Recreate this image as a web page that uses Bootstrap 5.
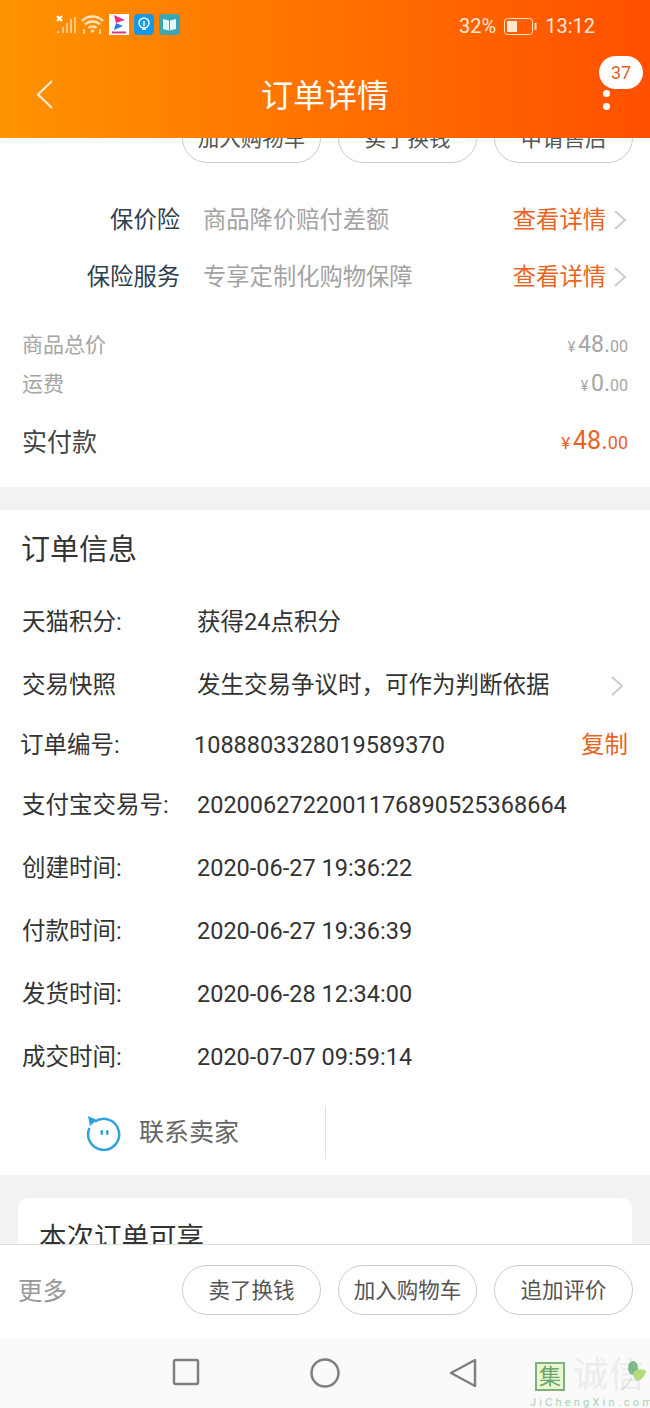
<!DOCTYPE html>
<html lang="zh-CN">
<head>
<meta charset="UTF-8">
<meta name="viewport" content="width=device-width, initial-scale=1.0">
<title>订单详情</title>
<link href="https://cdn.jsdelivr.net/npm/bootstrap@5.3.0/dist/css/bootstrap.min.css" rel="stylesheet">
<style>
body {
    font-family: Roboto, "Noto Sans CJK SC", sans-serif;
    background: #f2f2f2;
    color: #333;
    height: 1408px;
    overflow: hidden;
}
.app-head {
    height: 138px;
    background: linear-gradient(90deg, #ff9300, #ff5000);
    color: #fff;
    z-index: 5;
    flex: none;
}
.status-line { height: 52px; padding: 14px 55px 0 56px; }
.status-text { font-size: 20px; line-height: 24px; color: #ffe9d2; }
.status-icons { gap: 5px; }
.title-line { height: 86px; }
.app-title { font-size: 32px; line-height: 44px; margin-top: 1px; }
.back-btn { position: absolute; left: 36px; top: 80px; }
.more-dots { position: absolute; left: 603px; top: 90px; width: 8px; }
.more-dots i { display: block; width: 7px; height: 7px; border-radius: 50%; background: #fff; margin-bottom: 6px; }
.msg-count {
    position: absolute; left: 599px; top: 56px; width: 44px; height: 33px;
    border-radius: 17px; background: #fff; color: #d8602c;
    font-size: 18px; line-height: 33px; text-align: center;
}
.scroll-view { flex: 1 1 auto; overflow: hidden; min-height: 0; }
.scroll-inner { margin-top: -25px; }
.white-block { background: #fff; }
.pill-row { gap: 17px; padding-right: 17px; }
.pill-btn {
    width: 139px; height: 50px; border: 1px solid #ccc; border-radius: 25px;
    background: #fff; color: #555; font-size: 21.5px; line-height: 50px; text-align: center;
}
.top-pills { margin-bottom: 29px; }
.ins-row { height: 57px; font-size: 23.3px; }
.ins-label { width: 180px; text-align: right; color: #30404f; }
.ins-desc { margin-left: 23px; color: #a3a3a3; flex: 1; }
.ins-link { color: #e8641f; }
.arrow-gray { margin: -2px 23px 0 7px; }
.price-rows { padding: 20px 22px 6px; }
.price-row { height: 39px; font-size: 21px; color: #a5a5a5; }
.price-total { height: 77px; font-size: 25px; color: #444; }
.yen { font-size: 14px; margin-right: 3px; }
.int-part { font-size: 23px; }
.cent-part { font-size: 16px; }
.price-total .cost { color: #e8641f; margin-top: -3px; }
.price-total .yen { font-size: 17px; }
.price-total .int-part { font-size: 25px; }
.price-total .cent-part { font-size: 18px; }
.info-block { margin-top: 23px; }
.info-title { height: 82px; padding-left: 21px; font-size: 29px; color: #333; }
.info-row { height: 63px; padding: 0 22px; font-size: 23.5px; color: #333; }
.info-row.h-first { height: 62px; }
.info-row.h-tall { height: 64px; }
.info-row.h-short { height: 56px; }
.info-row.h-mid { height: 63px; }
.info-key { width: 175px; flex: none; }
.info-copy { color: #e8641f; margin-left: auto; }
.info-shift { margin-left: -2px; width: 174px; }
.contact-row { height: 86px; }
.contact-half { width: 326px; height: 53px; border-right: 1px solid #e3e3e3; padding-left: 86px; margin-top: 1px; gap: 17px; font-size: 25px; color: #666; }
.benefit-card {
    margin: 23px 18px 0; height: 200px; border-radius: 10px; background: #fff;
    padding: 20px 21px; font-size: 27.5px; line-height: 40px; color: #333;
}
.foot-bar { height: 94px; border-top: 1px solid #ddd; background: #fff; flex: none; z-index: 5; }
.foot-more { font-size: 24.5px; color: #999; padding: 13px 0 0 18px; }
.nav-strip { height: 70px; background: #fafafa; flex: none; position: relative; z-index: 5; }
.nav-btn { position: absolute; top: 20px; }
.nav-square { left: 172px; }
.nav-circle { left: 309px; }
.nav-back { left: 449px; }
.stamp { position: absolute; left: 530px; top: 18px; width: 120px; height: 52px; overflow: hidden; }
.stamp-box {
    position: absolute; left: 5px; top: 6px; width: 30px; height: 29px;
    border: 2px solid #7fb27a; background: #eaf8d2; color: #6fa56b;
    font-size: 22px; line-height: 25px; text-align: center;
}
.stamp-words { position: absolute; left: 43px; top: 1px; font-size: 35px; line-height: 38px; color: #ececec; letter-spacing: 1px; white-space: nowrap; }
.stamp-leaf { position: absolute; left: 90px; top: 4px; }
.stamp-url { position: absolute; left: 0; top: 40px; font-size: 11px; line-height: 13px; color: #a9d2b4; letter-spacing: 3.2px; white-space: nowrap; }
</style>
</head>
<body class="d-flex flex-column">

<header class="app-head position-relative">
    <div class="status-line d-flex justify-content-between">
        <div class="status-icons d-flex align-items-start">
            <svg width="20" height="21" viewBox="0 0 20 21">
                <g stroke="#ffc680" stroke-width="2" fill="none">
                    <path d="M2 19v-2M7 19v-6M11 19v-10M15 19v-14M19 19v-16" />
                </g>
                <path d="M1 2l5 5M6 2l-5 5" stroke="#fff" stroke-width="2" />
            </svg>
            <svg width="23" height="21" viewBox="0 0 23 21" fill="none" stroke="#ffe3bf" stroke-width="2.400">
                <path d="M1 7c6-6 15-6 21 0" />
                <path d="M4 10.500c4-4 11-4 15 0" />
                <path d="M7.500 14c2-2 6-2 8 0" />
                <circle cx="11.500" cy="17" r="1.800" fill="#ffe3bf" stroke="none" />
                <path d="M3 15v5M19 15v5" stroke-width="1.500" />
            </svg>
            <svg width="20" height="21" viewBox="0 0 20 21">
                <rect width="20" height="21" fill="#fff" />
                <path d="M5 1l11 5-9 3z" fill="#e8327c" />
                <path d="M7 9l7 3-9 4z" fill="#2a7de1" />
                <rect x="3" y="17.500" width="14" height="2" fill="#c9408c" />
            </svg>
            <svg width="20" height="21" viewBox="0 0 20 21">
                <rect width="20" height="21" rx="4" fill="#1399ec" />
                <circle cx="10" cy="9" r="5" fill="none" stroke="#fff" stroke-width="1.500" />
                <path d="M8 15h4M10 7v5" stroke="#fff" stroke-width="1.500" />
            </svg>
            <svg width="21" height="21" viewBox="0 0 21 21">
                <rect width="21" height="21" rx="4" fill="#3aa6b8" />
                <path d="M4 5l6 1.500v10l-6-1.500zM17 5l-6 1.500v10l6-1.500z" fill="#e4f7fb" />
            </svg>
        </div>
        <div class="status-text d-flex align-items-center gap-2 align-self-start">
            <span>32%</span>
            <svg width="33" height="17" viewBox="0 0 33 17">
                <rect x="0.500" y="0.500" width="28" height="16" rx="3" fill="none" stroke="#ffe3bf" />
                <rect x="3" y="3" width="10" height="11" fill="#ffe9d2" />
                <rect x="30.500" y="5" width="2" height="7" fill="#ffe3bf" />
            </svg>
            <span>13:12</span>
        </div>
    </div>
    <div class="title-line d-flex justify-content-center align-items-center">
        <h1 class="app-title fw-normal mb-0">订单详情</h1>
    </div>
    <svg class="back-btn" width="17" height="29" viewBox="0 0 17 29" fill="none" stroke="#ffe9d2" stroke-width="2.200">
        <path d="M16 1L2 14.500 16 28" />
    </svg>
    <div class="more-dots"><i></i><i></i></div>
    <div class="msg-count">37</div>
</header>

<main class="scroll-view">
    <div class="scroll-inner">
        <div class="white-block">
            <div class="pill-row top-pills d-flex justify-content-end">
                <div class="pill-btn">加入购物车</div>
                <div class="pill-btn">卖了换钱</div>
                <div class="pill-btn">申请售后</div>
            </div>
            <div class="ins-row d-flex align-items-center">
                <span class="ins-label">保价险</span>
                <span class="ins-desc">商品降价赔付差额</span>
                <span class="ins-link">查看详情</span>
                <svg class="arrow-gray" width="14" height="20" viewBox="0 0 14 20" fill="none" stroke="#ccc" stroke-width="2"><path d="M2 1l10 9-10 9" /></svg>
            </div>
            <div class="ins-row d-flex align-items-center">
                <span class="ins-label">保险服务</span>
                <span class="ins-desc">专享定制化购物保障</span>
                <span class="ins-link">查看详情</span>
                <svg class="arrow-gray" width="14" height="20" viewBox="0 0 14 20" fill="none" stroke="#ccc" stroke-width="2"><path d="M2 1l10 9-10 9" /></svg>
            </div>
            <div class="price-rows">
                <div class="price-row d-flex justify-content-between align-items-center">
                    <span>商品总价</span>
                    <span class="cost"><span class="yen">¥</span><span class="int-part">48.</span><span class="cent-part">00</span></span>
                </div>
                <div class="price-row d-flex justify-content-between align-items-center">
                    <span>运费</span>
                    <span class="cost"><span class="yen">¥</span><span class="int-part">0.</span><span class="cent-part">00</span></span>
                </div>
                <div class="price-row price-total d-flex justify-content-between align-items-center">
                    <span>实付款</span>
                    <span class="cost"><span class="yen">¥</span><span class="int-part">48.</span><span class="cent-part">00</span></span>
                </div>
            </div>
        </div>

        <div class="white-block info-block">
            <div class="info-title d-flex align-items-center">订单信息</div>
            <div class="info-row h-first d-flex align-items-center"><span class="info-key">天猫积分:</span><span>获得24点积分</span></div>
            <div class="info-row h-tall d-flex align-items-center">
                <span class="info-key">交易快照</span><span>发生交易争议时，可作为判断依据</span>
                <svg class="ms-auto me-1" width="14" height="20" viewBox="0 0 14 20" fill="none" stroke="#ccc" stroke-width="2"><path d="M2 1l10 9-10 9" /></svg>
            </div>
            <div class="info-row h-short d-flex align-items-center">
                <span class="info-key info-shift">订单编号:</span><span>1088803328019589370</span>
                <span class="info-copy">复制</span>
            </div>
            <div class="info-row h-mid d-flex align-items-center"><span class="info-key">支付宝交易号:</span><span>2020062722001176890525368664</span></div>
            <div class="info-row d-flex align-items-center"><span class="info-key">创建时间:</span><span>2020-06-27 19:36:22</span></div>
            <div class="info-row d-flex align-items-center"><span class="info-key">付款时间:</span><span>2020-06-27 19:36:39</span></div>
            <div class="info-row d-flex align-items-center"><span class="info-key">发货时间:</span><span>2020-06-28 12:34:00</span></div>
            <div class="info-row d-flex align-items-center"><span class="info-key">成交时间:</span><span>2020-07-07 09:59:14</span></div>
            <div class="contact-row d-flex align-items-center">
                <div class="contact-half d-flex align-items-center">
                    <svg width="36" height="36" viewBox="0 0 36 36" fill="none">
                        <path d="M9 6.500a15.500 15.500 0 1 1-5.500 6.500" stroke="#2fa3dc" stroke-width="2.500" />
                        <path d="M2 1l9 4-7 6z" fill="#2fa3dc" />
                        <rect x="14.500" y="15" width="2.500" height="5" rx="1.200" fill="#2fa3dc" />
                        <rect x="20" y="15" width="2.500" height="5" rx="1.200" fill="#2fa3dc" />
                    </svg>
                    <span>联系卖家</span>
                </div>
            </div>
        </div>

        <div class="benefit-card">本次订单可享</div>
    </div>
</main>

<footer class="foot-bar d-flex align-items-start justify-content-between pt-3">
    <div class="foot-more">更多</div>
    <div class="pill-row d-flex mt-1">
        <div class="pill-btn">卖了换钱</div>
        <div class="pill-btn">加入购物车</div>
        <div class="pill-btn">追加评价</div>
    </div>
</footer>

<nav class="nav-strip">
    <svg class="nav-btn nav-square" width="28" height="28" viewBox="0 0 28 28" fill="none" stroke="#808080" stroke-width="2.500"><rect x="2" y="2" width="24" height="24" rx="1.500" /></svg>
    <svg class="nav-btn nav-circle" width="32" height="32" viewBox="0 0 32 32" fill="none" stroke="#808080" stroke-width="2.500"><circle cx="16" cy="15" r="13.500" /></svg>
    <svg class="nav-btn nav-back" width="28" height="32" viewBox="0 0 28 32" fill="none" stroke="#808080" stroke-width="2.500" stroke-linejoin="round"><path d="M26 2v26L2 15z" /></svg>
    <div class="stamp">
        <div class="stamp-box">集</div>
        <div class="stamp-words">诚信</div>
        <svg class="stamp-leaf" width="28" height="32" viewBox="0 0 28 32"><path d="M1 30C7 26 10 22 12 17" stroke="#b8d8b0" fill="none" /><ellipse cx="13" cy="8" rx="5" ry="7" fill="#7fb88a" /><path d="M13 13c4-5 10-4 13-2-1 6-6 10-9 10-2-2-4-4-4-8z" fill="#b5dc7c" /></svg>
        <div class="stamp-url">JiChengXin.com</div>
    </div>
</nav>

<script src="https://cdn.jsdelivr.net/npm/bootstrap@5.3.0/dist/js/bootstrap.bundle.min.js"></script>
</body>
</html>
